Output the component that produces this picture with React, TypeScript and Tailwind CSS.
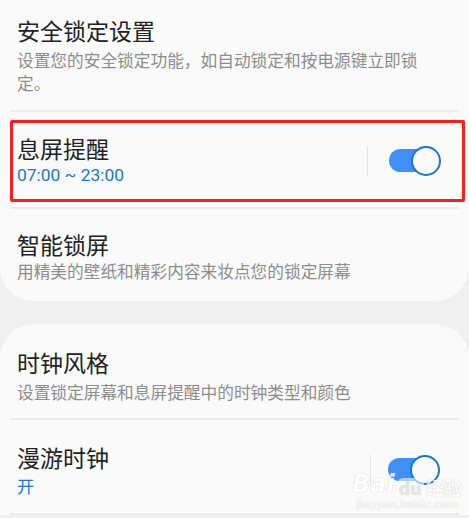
import React from 'react';

const font = { fontFamily: '"Noto Sans CJK SC", "Noto Sans", sans-serif' };
const numFont = { fontFamily: 'Roboto, "Noto Sans CJK SC", sans-serif' };

function Toggle() {
  return (
    <div className="relative h-[30px] w-[52px]">
      <div className="absolute left-0 top-[3px] h-[23px] w-[44px] rounded-full bg-[#3f8ff5]" />
      <div className="absolute right-0 top-0 h-[30px] w-[30px] rounded-full border-[2px] border-[#1c74d9] bg-[#fafafa]" />
    </div>
  );
}

function Divider() {
  return <div className="mx-[10px] h-[2px] bg-[#ececec]" />;
}

export default function App() {
  return (
    <div className="relative h-[518px] w-[469px] overflow-hidden bg-[#f0f0f0]" style={font}>
      {/* Card 1 */}
      <div className="rounded-b-[34px] bg-[#fafafa]">
        <div className="pl-[17px] pr-[32px] pt-[15px] pb-[15px]">
          <div className="text-[23px] leading-[30px] text-[#222]">安全锁定设置</div>
          <div className="mt-[4px] text-[16.7px] leading-[23px] text-[#8d8d8d]">
            设置您的安全锁定功能，如自动锁定和按电源键立即锁定。
          </div>
        </div>
        <Divider />

        {/* highlighted row */}
        <div className="pt-[8px] pb-[5px]">
          <div className="ml-[10px] mr-[4px] flex h-[82px] items-center rounded-[2px] border-[3px] border-[#fb1c1c] pl-[4px] pr-[21px]">
            <div className="flex-1 pb-[4px]">
              <div className="text-[23px] leading-[30px] text-[#222]">息屏提醒</div>
              <div className="mt-[1px] text-[17.4px] leading-[22px] text-[#1b76d2]" style={numFont}>07:00 ~ 23:00</div>
            </div>
            <div className="mr-[21px] h-[30px] w-px bg-[#e2e2e2]" />
            <Toggle />
          </div>
        </div>
        <Divider />

        <div className="pl-[17px] pr-[32px] pt-[20px] pb-[18px]">
          <div className="text-[23px] leading-[30px] text-[#222]">智能锁屏</div>
          <div className="mt-[1px] text-[16.7px] leading-[23px] text-[#8d8d8d]">用精美的壁纸和精彩内容来妆点您的锁定屏幕</div>
        </div>
      </div>

      {/* Card 2 */}
      <div className="mt-[23px] rounded-t-[34px] bg-[#fafafa]">
        <div className="pl-[17px] pr-[32px] pt-[23px] pb-[14px]">
          <div className="text-[23px] leading-[30px] text-[#222]">时钟风格</div>
          <div className="mt-[4px] text-[16.7px] leading-[23px] text-[#8d8d8d]">设置锁定屏幕和息屏提醒中的时钟类型和颜色</div>
        </div>
        <Divider />
        <div className="flex items-center pl-[17px] pr-[29px] pt-[22px] pb-[16px]">
          <div className="flex-1">
            <div className="text-[23px] leading-[30px] text-[#222]">漫游时钟</div>
            <div className="mt-[2px] text-[17px] leading-[23px] text-[#1b76d2]">开</div>
          </div>
          <div className="mr-[17px] h-[30px] w-px bg-[#e2e2e2]" />
          <Toggle />
        </div>
        <Divider />
      </div>

      {/* watermark */}
      <div className="pointer-events-none absolute left-[352px] top-[472px] flex flex-col items-center leading-none opacity-80">
        <div className="flex items-end gap-[2px]">
          <span className="text-[24px] font-bold italic text-white [text-shadow:0_0_1px_#bbb]" style={{ fontFamily: '"DejaVu Sans", sans-serif' }}>Bai</span>
          <span className="rounded-[6px] bg-white/70 px-[2px] text-[18px] font-bold text-[#e2e2e2] [text-shadow:0_0_1px_#bbb]">du</span>
          <span className="text-[18px] font-bold text-white [text-shadow:0_0_1px_#aaa]">经验</span>
        </div>
        <div className="mt-[3px] text-[11px] text-white [text-shadow:0_0_1px_#aaa]" style={{ fontFamily: '"DejaVu Sans", sans-serif' }}>jingyan.baidu.com</div>
      </div>
    </div>
  );
}
